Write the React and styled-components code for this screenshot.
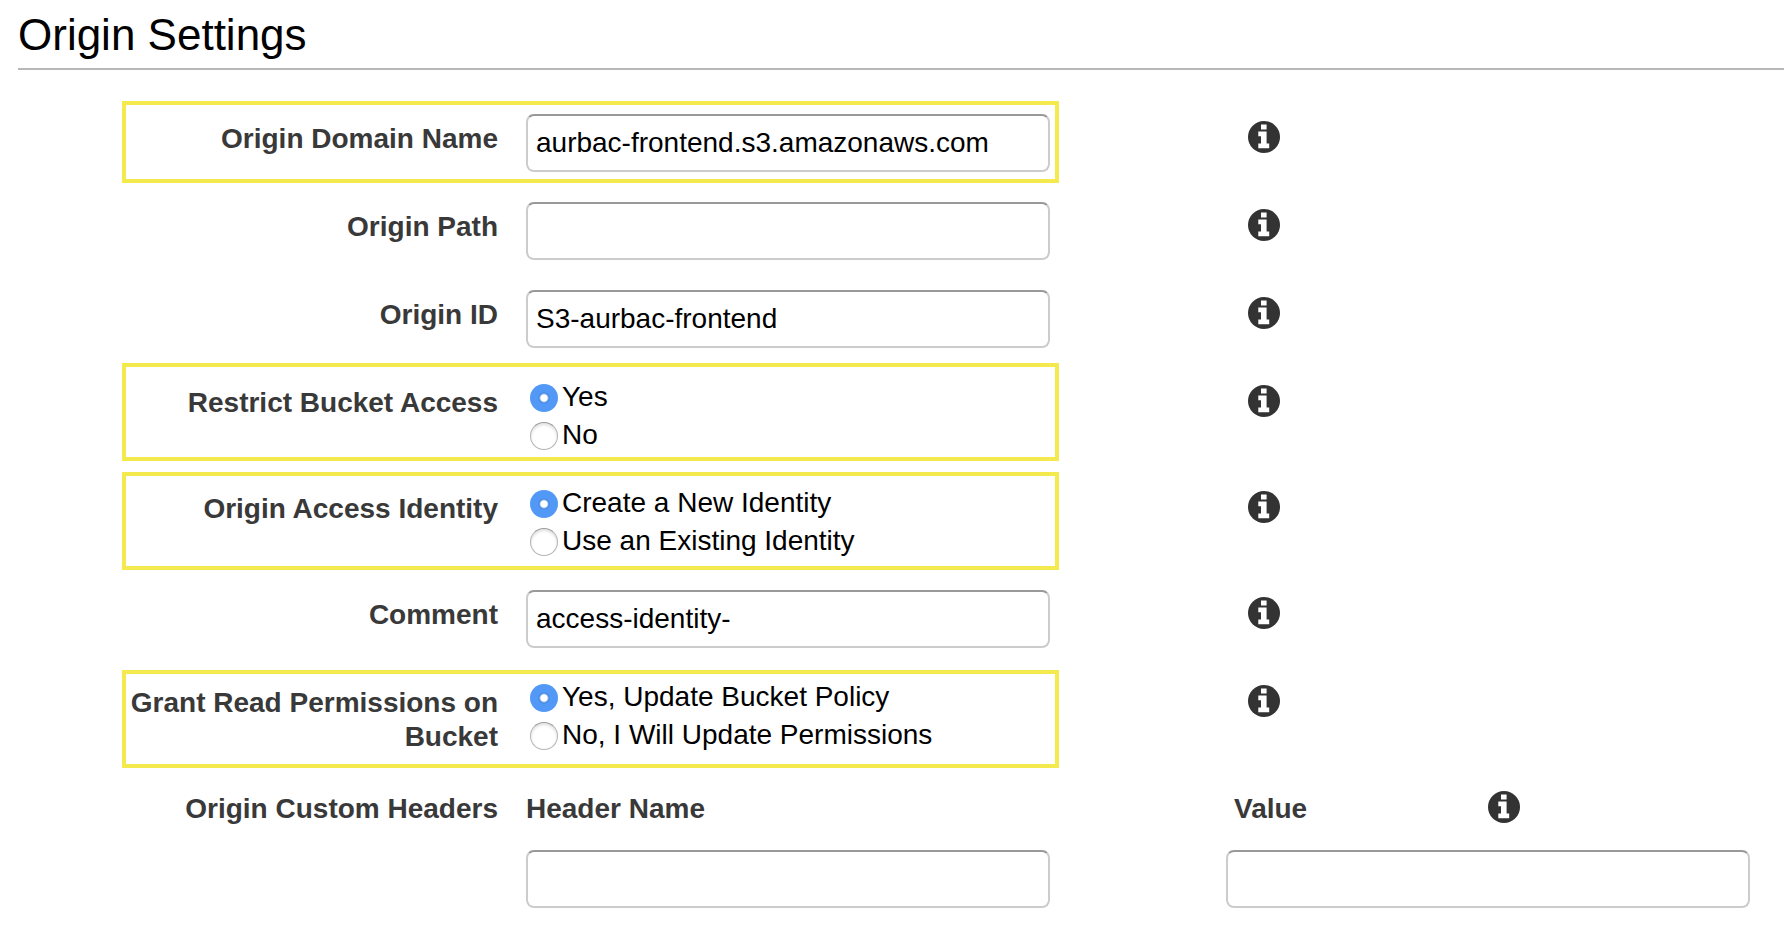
import React, { useState } from "react";
import styled, { createGlobalStyle } from "styled-components";

const GlobalStyle = createGlobalStyle`
  *, *::before, *::after { box-sizing: border-box; }
  body {
    margin: 0;
    background: #fff;
    color: #000;
    font-family: "Liberation Sans", Arial, Helvetica, sans-serif;
    font-size: 28px;
  }
`;

const Page = styled.main`
  padding: 10px 8px 22px 18px;
`;

const Title = styled.h1`
  margin: 0;
  padding-bottom: 8px;
  border-bottom: 2px solid #b8b8b8;
  font-size: 44px;
  font-weight: 400;
  line-height: 50px;
`;

const Form = styled.form`
  padding: 28px 34px 0 104px;
`;

const Row = styled.div`
  position: relative;
  display: grid;
  grid-template-columns:
    minmax(0, 376fr) minmax(0, 524fr) minmax(0, 120fr) minmax(0, 524fr);
  column-gap: 28px;
  align-items: start;
  min-height: ${(p) => p.$height || 88}px;
  padding-top: 16px;
`;

const Highlight = styled.div`
  position: absolute;
  grid-column: 1 / 3;
  top: ${(p) => p.$top}px;
  right: -9px;
  left: 0;
  height: ${(p) => p.$height}px;
  border: 4px solid #f4ea4e;
  pointer-events: none;
`;

const Label = styled.label`
  grid-column: ${(p) => p.$column || 1};
  padding-top: 8px;
  color: #393939;
  font-weight: 700;
  line-height: 34px;
  text-align: ${(p) => (p.$column ? "left" : "right")};
`;

const TextInput = styled.input`
  grid-column: ${(p) => p.$column || 2};
  width: 100%;
  height: 58px;
  padding: 0 8px;
  border: 2px solid #ccc;
  border-top-color: #999;
  border-radius: 8px;
  background: #fff;
  color: #000;
  font: inherit;
`;

const RadioGroup = styled.div`
  grid-column: 2;
`;

const Option = styled.label`
  display: flex;
  align-items: flex-start;
  height: 38px;
  line-height: 38px;
  white-space: nowrap;
`;

const Radio = styled.input`
  appearance: none;
  flex: none;
  width: 28px;
  height: 28px;
  margin: 6px 4px 0;
  border: 1px solid #b4b4b4;
  border-top-color: #9c9c9c;
  border-radius: 50%;
  background: #fff;
  box-shadow: inset 0 2px 3px #0000001f;

  &:checked {
    border: 0;
    background: radial-gradient(circle, #fff 0 3px, #4285dd 5px, #5198f7 6px);
    box-shadow: none;
  }
`;

const InfoSlot = styled.div`
  grid-column: 4;
  padding: 7px 0 0 22px;
`;

const InfoButton = styled.button`
  display: block;
  width: 32px;
  height: 32px;
  padding: 0;
  border: 0;
  border-radius: 50%;
  background: none;
`;

const ValueHeading = styled.div`
  grid-column: 4;
  display: grid;
  grid-template-columns: 1fr 1fr;
  align-items: start;
`;

const ValueLabel = styled(Label)`
  padding-left: 8px;
`;

const ValueInfo = styled.div`
  grid-column: 2;
  padding-top: 7px;
`;

function Info({ topic }) {
  return (
    <InfoButton type="button" aria-label={`About ${topic}`}>
      <svg width="32" height="32" viewBox="0 0 32 32" aria-hidden="true">
        <circle cx="16" cy="16" r="16" fill="#333" />
        <path
          fill="#fff"
          d="M13 3.5h5.6v5H13zM10.3 10.6h8.3v11.8h2.6v4.8H10.3v-4.8H13v-7.2h-2.7z"
        />
      </svg>
    </InfoButton>
  );
}

function TextRow({ id, label, value, highlight }) {
  return (
    <Row>
      <Label htmlFor={id}>{label}</Label>
      <TextInput id={id} type="text" defaultValue={value} />
      <InfoSlot>
        <Info topic={label} />
      </InfoSlot>
      {highlight && <Highlight $top={highlight} $height={82} />}
    </Row>
  );
}

function RadioRow({ id, label, options, highlight }) {
  const [selected, setSelected] = useState(options[0]);
  return (
    <Row $height={106}>
      <Label as="span" id={`${id}-label`}>
        {label}
      </Label>
      <RadioGroup role="radiogroup" aria-labelledby={`${id}-label`}>
        {options.map((option) => (
          <Option key={option}>
            <Radio
              type="radio"
              name={id}
              checked={selected === option}
              onChange={() => setSelected(option)}
            />
            {option}
          </Option>
        ))}
      </RadioGroup>
      <InfoSlot>
        <Info topic={label} />
      </InfoSlot>
      <Highlight $top={highlight} $height={98} />
    </Row>
  );
}

export default function App() {
  return (
    <>
      <GlobalStyle />
      <Page>
        <Title>Origin Settings</Title>
        <Form>
          <TextRow
            id="domain"
            label="Origin Domain Name"
            value="aurbac-frontend.s3.amazonaws.com"
            highlight={3}
          />
          <TextRow id="path" label="Origin Path" value="" />
          <TextRow id="origin-id" label="Origin ID" value="S3-aurbac-frontend" />
          <RadioRow
            id="restrict"
            label="Restrict Bucket Access"
            options={["Yes", "No"]}
            highlight={1}
          />
          <RadioRow
            id="identity"
            label="Origin Access Identity"
            options={["Create a New Identity", "Use an Existing Identity"]}
            highlight={4}
          />
          <TextRow id="comment" label="Comment" value="access-identity-" />
          <RadioRow
            id="grant"
            label="Grant Read Permissions on Bucket"
            options={["Yes, Update Bucket Policy", "No, I Will Update Permissions"]}
            highlight={8}
          />
          <Row $height={66}>
            <Label as="span">Origin Custom Headers</Label>
            <Label htmlFor="header-name" $column={2}>
              Header Name
            </Label>
            <ValueHeading>
              <ValueLabel htmlFor="header-value" $column={1}>
                Value
              </ValueLabel>
              <ValueInfo>
                <Info topic="Origin Custom Headers" />
              </ValueInfo>
            </ValueHeading>
          </Row>
          <Row $height={74}>
            <TextInput id="header-name" type="text" />
            <TextInput id="header-value" type="text" $column={4} />
          </Row>
        </Form>
      </Page>
    </>
  );
}
